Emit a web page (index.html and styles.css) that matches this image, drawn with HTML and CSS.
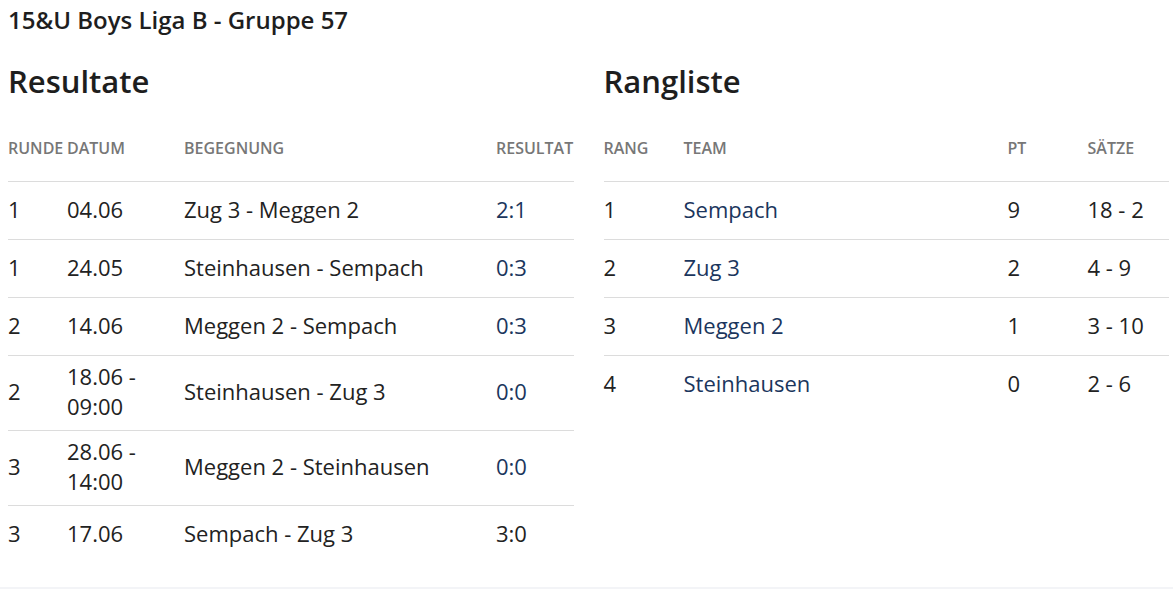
FILE: index.html
```html
<!DOCTYPE html>
<html lang="de">
<head>
<meta charset="utf-8">
<title>15&amp;U Boys Liga B - Gruppe 57</title>
<link rel="stylesheet" href="styles.css">
</head>
<body>
<main class="page">
  <h1 class="title">15&amp;U Boys Liga B - Gruppe 57</h1>
  <div class="columns">
    <section class="panel">
      <h2 class="heading">Resultate</h2>
      <div class="table results">
        <div class="row head">
          <div class="c-runde">Runde</div>
          <div class="c-datum">Datum</div>
          <div class="c-beg">Begegnung</div>
          <div class="c-res">Resultat</div>
        </div>
        <div class="row">
          <div class="c-runde">1</div>
          <div class="c-datum">04.06</div>
          <div class="c-beg">Zug 3 - Meggen 2</div>
          <div class="c-res link">2:1</div>
        </div>
        <div class="row">
          <div class="c-runde">1</div>
          <div class="c-datum">24.05</div>
          <div class="c-beg">Steinhausen - Sempach</div>
          <div class="c-res link">0:3</div>
        </div>
        <div class="row">
          <div class="c-runde">2</div>
          <div class="c-datum">14.06</div>
          <div class="c-beg">Meggen 2 - Sempach</div>
          <div class="c-res link">0:3</div>
        </div>
        <div class="row">
          <div class="c-runde">2</div>
          <div class="c-datum">18.06 -<br>09:00</div>
          <div class="c-beg">Steinhausen - Zug 3</div>
          <div class="c-res link">0:0</div>
        </div>
        <div class="row">
          <div class="c-runde">3</div>
          <div class="c-datum">28.06 -<br>14:00</div>
          <div class="c-beg">Meggen 2 - Steinhausen</div>
          <div class="c-res link">0:0</div>
        </div>
        <div class="row">
          <div class="c-runde">3</div>
          <div class="c-datum">17.06</div>
          <div class="c-beg">Sempach - Zug 3</div>
          <div class="c-res">3:0</div>
        </div>
      </div>
    </section>
    <section class="panel">
      <h2 class="heading">Rangliste</h2>
      <div class="table ranking">
        <div class="row head">
          <div class="c-rang">Rang</div>
          <div class="c-team">Team</div>
          <div class="c-pt">Pt</div>
          <div class="c-saetze">Sätze</div>
        </div>
        <div class="row">
          <div class="c-rang">1</div>
          <div class="c-team link">Sempach</div>
          <div class="c-pt">9</div>
          <div class="c-saetze">18 - 2</div>
        </div>
        <div class="row">
          <div class="c-rang">2</div>
          <div class="c-team link">Zug 3</div>
          <div class="c-pt">2</div>
          <div class="c-saetze">4 - 9</div>
        </div>
        <div class="row">
          <div class="c-rang">3</div>
          <div class="c-team link">Meggen 2</div>
          <div class="c-pt">1</div>
          <div class="c-saetze">3 - 10</div>
        </div>
        <div class="row">
          <div class="c-rang">4</div>
          <div class="c-team link">Steinhausen</div>
          <div class="c-pt">0</div>
          <div class="c-saetze">2 - 6</div>
        </div>
      </div>
    </section>
  </div>
</main>
<footer class="footer"></footer>
</body>
</html>
```

FILE: styles.css
```css
html, body {
  margin: 0;
  padding: 0;
  background: #ffffff;
}

body {
  font-family: "Open Sans", "Noto Sans", sans-serif;
  color: #222222;
}

.page {
  padding: 0 4px 0 8px;
  height: 587px;
  box-sizing: border-box;
  overflow: hidden;
}

.title {
  margin: 0;
  padding-top: 5px;
  font-size: 24px;
  line-height: 30px;
  font-weight: 600;
  color: #1e1e1e;
}

.columns {
  display: grid;
  grid-template-columns: 1fr 1fr;
  column-gap: 30px;
}

.heading {
  margin: 26px 0 0 0;
  font-size: 31px;
  line-height: 40px;
  font-weight: 600;
  color: #1e1e1e;
}

.table {
  display: flex;
  flex-direction: column;
}

.row {
  display: flex;
  align-items: center;
  min-height: 58px;
  padding: 5px 0 9px 0;
  box-sizing: border-box;
  border-top: 1px solid #dcdcdc;
  font-size: 22px;
  line-height: 30px;
}

.row > div {
  flex: none;
}

.row.head {
  border-top: none;
  min-height: 66px;
  margin-top: 14px;
  padding: 7px 0;
  font-size: 16px;
  font-weight: 600;
  text-transform: uppercase;
  color: #777777;
}

.link {
  color: #1b365d;
}

.results .c-runde { width: 59px; }
.results .c-datum { width: 117px; }
.results .c-beg { width: 312px; }
.results .c-res { flex: 1 1 auto; }

.ranking .c-rang { width: 80px; }
.ranking .c-team { width: 324px; }
.ranking .c-pt { width: 80px; }
.ranking .c-saetze { flex: 1 1 auto; }

.footer {
  height: 2px;
  background: #f3f4f7;
}
```
